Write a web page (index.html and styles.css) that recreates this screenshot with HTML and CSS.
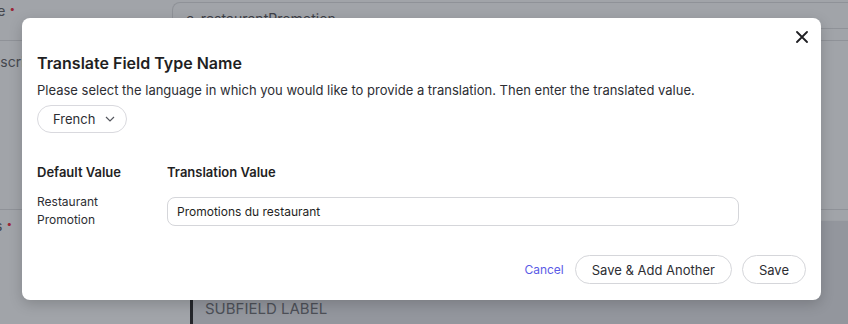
FILE: index.html
```html
<!DOCTYPE html>
<html lang="en">
<head>
  <meta charset="UTF-8" />
  <meta name="viewport" content="width=device-width, initial-scale=1.0"/>
  <title>Translate Field Type Name</title>
  <link rel="stylesheet" href="styles.css">
</head>
<body>

  <!-- page behind the dialog, dimmed -->
  <div class="page">
    <div class="row row-name">
      <div class="label label-right">Name<span class="req">•</span></div>
      <div class="field">
        <div class="fake-input">c_restaurantPromotion</div>
      </div>
    </div>
    <div class="row row-desc">
      <div class="label label-left">Description</div>
    </div>
    <div class="row row-sub">
      <div class="label label-right">Subfields<span class="req">•</span></div>
      <div class="sub-panel">
        <div class="sub-item">SUBFIELD LABEL</div>
      </div>
    </div>
  </div>

  <div class="modal">
    <button class="close" aria-label="Close">
      <svg width="12" height="12" viewBox="0 0 12 12">
        <path d="M1 1 L11 11 M11 1 L1 11" stroke="#1f1f23" stroke-width="1.8" stroke-linecap="round"/>
      </svg>
    </button>

    <h2 class="title">Translate Field Type Name</h2>
    <p class="intro">Please select the language in which you would like to provide a translation. Then enter the translated value.</p>

    <button class="lang">
      French
      <svg width="10" height="6" viewBox="0 0 10 6">
        <path d="M1 1 L5 5 L9 1" fill="none" stroke="#55575e" stroke-width="1.2"/>
      </svg>
    </button>

    <div class="grid">
      <div class="col-head">Default Value</div>
      <div class="col-head">Translation Value</div>
      <div class="default-value">Restaurant<br>Promotion</div>
      <div><input class="text-input" type="text" value="Promotions du restaurant"></div>
    </div>

    <div class="footer">
      <a class="cancel" href="#">Cancel</a>
      <button class="btn">Save &amp; Add Another</button>
      <button class="btn">Save</button>
    </div>
  </div>

</body>
</html>
```

FILE: styles.css
```css
body {
  margin: 0;
  padding: 0;
  font-family: 'Inter', 'Noto Sans', sans-serif;
  background: #a1a4a9;
  width: 848px;
  height: 324px;
  overflow: hidden;
  position: relative;
}

/* background page */
.page {
  color: #45484f;
  font-size: 14px;
}
.row {
  display: flex;
  border-bottom: 1px solid #8f9298;
}
.row-name {
  height: 40px;
  align-items: flex-start;
}
.row-name .field {
  padding-top: 2px;
  margin-left: 157px;
  flex: 1;
}
.fake-input {
  height: 27px;
  border: 1px solid #8f9298;
  border-right: none;
  border-radius: 8px 0 0 8px;
  padding: 7px 0 0 13px;
  box-sizing: border-box;
  color: #3e4148;
  line-height: 18px;
}
.row-desc {
  height: 169px;
  align-items: flex-start;
  padding-top: 12px;
  box-sizing: border-box;
}
.row-sub {
  border-bottom: none;
  height: 113px;
  align-items: flex-start;
}
.label {
  white-space: nowrap;
}
.label-right {
  width: 100px;
  flex: none;
  text-align: right;
}
.row-name .label-right {
  margin-top: 2px;
  margin-left: -85px;
}
.row-sub .label-right {
  margin-top: 7px;
  margin-left: -88px;
}
.label-left {
  margin-left: -18px;
}
.req {
  color: #9b2438;
  font-size: 10px;
  margin-left: 4px;
  position: relative;
  top: -4px;
}
.sub-panel {
  margin-left: 178px;
  margin-top: 10px;
  flex: 1;
  height: 103px;
  background: #93969d;
  border-top: 1px solid #9ea1a6;
}
.sub-item {
  margin-top: 68px;
  border-left: 3px solid #24262b;
  padding: 10px 0 0 12px;
  height: 40px;
  color: #4d5058;
  font-size: 15px;
}

/* dialog */
.modal {
  position: absolute;
  left: 22px;
  top: 18px;
  width: 799px;
  height: 282px;
  box-sizing: border-box;
  background: #fff;
  border-radius: 8px;
  box-shadow: 0 4px 14px rgba(0, 0, 0, 0.18);
  padding: 33px 15px 16px 15px;
  color: #1f1f23;
}
.close {
  position: absolute;
  top: 13px;
  right: 13px;
  border: none;
  background: none;
  padding: 0;
  width: 12px;
  height: 12px;
  cursor: pointer;
}
.title {
  margin: 0;
  font-size: 16px;
  font-weight: 600;
  line-height: 24px;
}
.intro {
  margin: 5px 0 0;
  font-size: 13px;
  line-height: 20px;
  color: #2d2e33;
}
.lang {
  margin-top: 5px;
  display: inline-flex;
  align-items: center;
  gap: 10px;
  height: 28px;
  padding: 0 11px 0 15px;
  border: 1px solid #d9d9de;
  border-radius: 14px;
  background: #fff;
  font-family: inherit;
  font-size: 13px;
  color: #2d2e33;
}
.grid {
  margin-top: 30px;
  display: grid;
  grid-template-columns: 130px 572px;
  row-gap: 16px;
}
.col-head {
  font-size: 13px;
  font-weight: 600;
  line-height: 18px;
}
.default-value {
  font-size: 12px;
  line-height: 18px;
  color: #2d2e33;
  margin-top: -4px;
}
.text-input {
  width: 100%;
  height: 29px;
  box-sizing: border-box;
  border: 1px solid #d5d6da;
  border-radius: 8px;
  padding: 0 9px;
  font-family: inherit;
  font-size: 12px;
  color: #1f1f23;
  outline: none;
}
.footer {
  margin-top: 26px;
  display: flex;
  justify-content: flex-end;
  align-items: center;
  gap: 10px;
}
.cancel {
  color: #5b5be6;
  text-decoration: none;
  font-size: 12px;
  margin-right: 1px;
}
.btn {
  height: 29px;
  padding: 0 16px;
  border: 1px solid #d5d6da;
  border-radius: 15px;
  background: #fff;
  font-family: inherit;
  font-size: 13px;
  color: #2d2e33;
  cursor: pointer;
}
```
